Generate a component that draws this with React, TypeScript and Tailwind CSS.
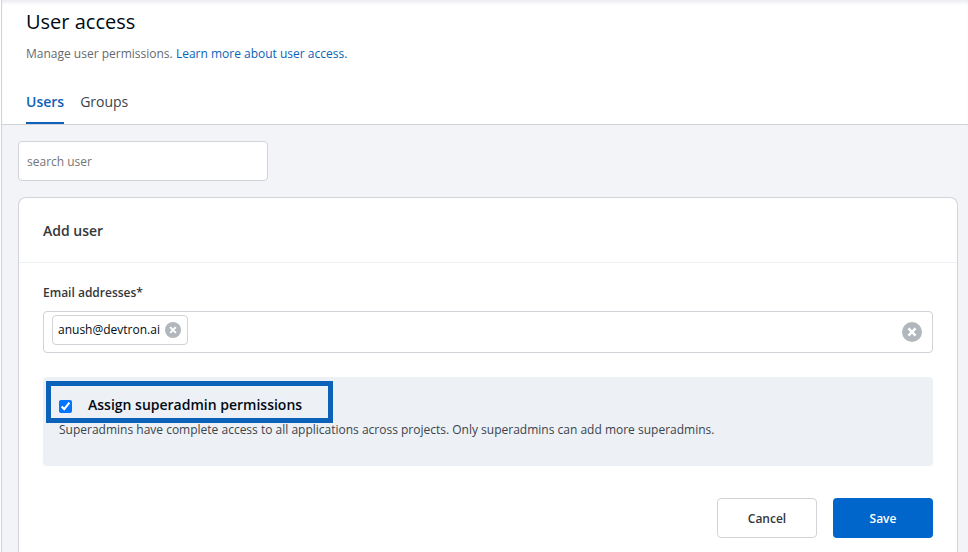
import { useState } from "react";

function ClearIcon({ className }: { className: string }) {
  return (
    <svg viewBox="0 0 20 20" className={className} aria-hidden="true">
      <circle cx="10" cy="10" r="10" fill="#b1b7bc" />
      <path d="M6.4 6.4l7.2 7.2M13.6 6.4l-7.2 7.2" stroke="#fff" strokeWidth="2.5" fill="none" />
    </svg>
  );
}

function PageHeader() {
  return (
    <header className="border-b border-[#d0d4d9] bg-white px-6 pt-2 shadow-[inset_0_4px_4px_-2px_#e6e8ef]">
      <h1 className="text-xl leading-7 text-[#000a14]">User access</h1>
      <p className="mt-2 text-xs leading-5 text-[#666a70]">
        Manage user permissions.{" "}
        <a href="#learn" className="text-[#0b62b8]">
          Learn more about user access.
        </a>
      </p>
      <nav className="mt-6 flex gap-4 text-sm leading-7">
        <a href="#users" className="border-b-2 border-[#1062b8] pb-1.5 font-semibold text-[#1062b8]">
          Users
        </a>
        <a href="#groups" className="pb-1.5 text-[#3b444c]">
          Groups
        </a>
      </nav>
    </header>
  );
}

function EmailField() {
  return (
    <div>
      <label htmlFor="emails" className="block text-xs leading-5 font-semibold text-[#33373b]">
        Email addresses*
      </label>
      <div className="mt-2 flex h-[42px] items-center rounded border border-[#d0d4d9] pr-2.5 pl-2">
        <span className="mb-1 flex h-[30px] items-center gap-[5px] rounded border border-[#d0d4d9] pr-1.5 pl-[5px] text-xs text-[#000a14]">
          anush@devtron.ai
          <button type="button" aria-label="Remove anush@devtron.ai">
            <ClearIcon className="block size-4" />
          </button>
        </span>
        <input id="emails" type="text" className="min-w-0 flex-1 px-2 text-xs outline-none" />
        <button type="button" aria-label="Clear all">
          <ClearIcon className="block size-5" />
        </button>
      </div>
    </div>
  );
}

function SuperadminPanel() {
  const [checked, setChecked] = useState(true);
  return (
    <div className="mt-6 rounded bg-[#edf1f5] px-4 pt-4 pb-[26px]">
      <div className="relative flex w-fit">
        <label className="flex items-center gap-4 text-sm leading-6 font-semibold text-[#000a14]">
          <input
            type="checkbox"
            checked={checked}
            onChange={(e) => setChecked(e.target.checked)}
            className="mt-0.5 size-[13px] accent-[#0075ff]"
          />
          Assign superadmin permissions
        </label>
        <span className="pointer-events-none absolute -top-3 -right-[31px] -bottom-1.5 -left-[13px] border-5 border-[#0b62b8]" />
      </div>
      <p className="mt-[3px] text-xs leading-5 text-[#3b444c]">
        Superadmins have complete access to all applications across projects. Only superadmins can add more superadmins.
      </p>
    </div>
  );
}

export default function App() {
  return (
    <div className="bg-white pl-px font-['Open_Sans','Noto_Sans',sans-serif]">
      <div className="flex min-h-screen flex-col border-l border-[#d0d4d9] bg-[#f2f4f8]">
        <PageHeader />
        <main className="flex flex-1 flex-col gap-4 pt-4 pr-2.5 pl-4">
          <input
            type="search"
            aria-label="search user"
            placeholder="search user"
            className="h-10 w-[250px] rounded border border-[#d0d4d9] bg-white px-2 text-xs outline-none placeholder:text-[#757575]"
          />
          <section className="flex-1 rounded-t-lg border border-b-0 border-[#d0d4d9] bg-white">
            <h2 className="border-b border-[#edf1f5] px-6 pt-[21px] pb-[19px] text-sm leading-6 font-semibold text-[#33373b]">
              Add user
            </h2>
            <form className="px-6 pt-5 pb-3" onSubmit={(e) => e.preventDefault()}>
              <EmailField />
              <SuperadminPanel />
              <div className="mt-8 flex justify-end gap-4">
                <button
                  type="button"
                  className="h-10 w-[100px] rounded border border-[#d0d4d9] bg-white pt-0.5 text-xs font-semibold text-[#33373b]"
                >
                  Cancel
                </button>
                <button type="submit" className="h-10 w-[100px] rounded bg-[#0066cc] pt-0.5 text-xs font-semibold text-white">
                  Save
                </button>
              </div>
            </form>
          </section>
        </main>
      </div>
    </div>
  );
}
